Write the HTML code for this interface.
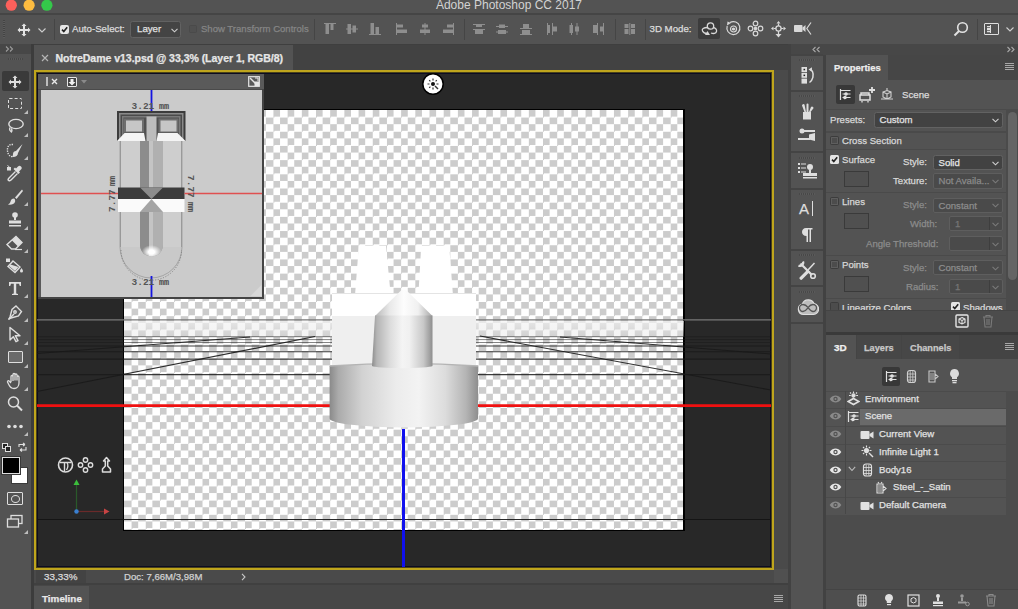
<!DOCTYPE html>
<html><head><meta charset="utf-8">
<style>
*{margin:0;padding:0;box-sizing:border-box}
html,body{width:1018px;height:609px;overflow:hidden;background:#535353;font-family:"Liberation Sans",sans-serif;color:#d6d6d6;font-size:10px}
.a{position:absolute}
.t{white-space:nowrap;line-height:12px;-webkit-text-stroke:0.25px currentColor}
#title{left:0;top:0;width:1018px;height:13px;background:#535353}
#titleline{left:0;top:13px;width:1018px;height:2px;background:#454545}
#opts{left:0;top:15px;width:1018px;height:29px;background:#535353}
#optsline{left:0;top:44px;width:1018px;height:1px;background:#3f3f3f}
#tools{left:0;top:44px;width:31px;height:565px;background:#535353}
#toolshead{left:0;top:44px;width:31px;height:10px;background:#474747}
#gapL{left:31px;top:44px;width:3px;height:565px;background:#3c3c3c}
#tabrow{left:34px;top:45px;width:754px;height:25px;background:#424242}
#doctab{left:34px;top:45px;width:259px;height:25px;background:#535353}
#docwin{left:34px;top:70px;width:754px;height:514px;background:#4a4a4a}
#frame{left:34px;top:70px;width:740px;height:499.5px;border:2px solid #bfa51d;background:#282828;box-shadow:inset 0 0 0 1px #4a4218,inset 0 0 0 2px #0c0c22}
#status{left:34px;top:570px;width:740px;height:14px;background:#4a4a4a}
#zoomf{left:36px;top:570px;width:50px;height:13px;background:#434343}
#tlrow{left:34px;top:584px;width:754px;height:25px;background:#474747}
#tltab{left:34px;top:586px;width:55px;height:23px;background:#535353}
#gapM{left:788px;top:44px;width:3px;height:565px;background:#424242}
#iconcol{left:791px;top:44px;width:32px;height:565px;background:#535353}
#iconhead{left:791px;top:44px;width:227px;height:11px;background:#474747}
#gapR{left:823px;top:55px;width:3px;height:554px;background:#424242}
#rpanel{left:826px;top:55px;width:192px;height:554px;background:#535353}

#proptabs{left:826px;top:55px;width:192px;height:25px;background:#464646}
#proptab{left:826px;top:55px;width:62px;height:25px;background:#535353}
#checker{left:124px;top:110px;width:559px;height:419.5px;
 background-color:#fff;
 background-image:conic-gradient(#cccccc 0 25%,#fff 0 50%,#cccccc 0 75%,#fff 0);
 background-size:14.2px 14.2px;background-position:0 0}

</style></head><body>

<!-- skeleton -->
<div class="a" id="title"></div>
<div class="a" id="titleline"></div>
<div class="a" id="opts"></div>
<div class="a" id="optsline"></div>
<div class="a" id="tools"></div>
<div class="a" id="toolshead"></div>
<div class="a" id="gapL"></div>
<div class="a" id="tabrow"></div>
<div class="a" id="doctab"></div>
<div class="a" id="docwin"></div>
<div class="a" id="frame"></div>
<div class="a" id="status"></div>
<div class="a" id="zoomf"></div>
<div class="a" id="tlrow"></div>
<div class="a" id="tltab"></div>
<div class="a" id="gapM"></div>
<div class="a" id="iconcol"></div>
<div class="a" id="iconhead"></div>
<div class="a" id="gapR"></div>
<div class="a" id="rpanel"></div>

<div class="a" id="proptabs"></div>
<div class="a" id="proptab"></div>

<!-- opts -->
<svg class="a" style="left:0;top:0" width="60" height="13"><circle cx="11.3" cy="5.2" r="5.6" fill="#fc605b"/><circle cx="29.1" cy="5.2" r="5.6" fill="#fdbc40"/><circle cx="46.9" cy="5.2" r="5.6" fill="#34c84a"/></svg>
<div class="a" style="left:0;top:-3px;width:1018px;text-align:center;font-size:12px;color:#d2d2d2;line-height:16px">Adobe Photoshop CC 2017</div>
<div class="a" style="left:3px;top:20px;width:2px;height:18px;background:repeating-linear-gradient(#444 0 1px,#5c5c5c 1px 2px)"></div>
<svg class="a" style="left:17px;top:23px" width="14" height="14" viewBox="0 0 14 14"><path d="M7 0.5L9.5 3H8v3h3V4.5L13.5 7 11 9.5V8H8v3h1.5L7 13.5 4.5 11H6V8H3v1.5L0.5 7 3 4.5V6h3V3H4.5z" fill="#e4e4e4"/></svg>
<svg class="a" style="left:38px;top:28px" width="8" height="5"><path d="M0.5 0.5L4 4l3.5-3.5" stroke="#cfcfcf" stroke-width="1.1" fill="none"/></svg>
<div class="a" style="left:54px;top:19px;width:1px;height:21px;background:#454545"></div>
<div class="a" style="left:314px;top:19px;width:1px;height:21px;background:#454545"></div>
<div class="a" style="left:464px;top:19px;width:1px;height:21px;background:#454545"></div>
<div class="a" style="left:614.5px;top:19px;width:1px;height:21px;background:#454545"></div>
<div class="a" style="left:645px;top:19px;width:1px;height:21px;background:#454545"></div>
<div class="a" style="left:976.5px;top:19px;width:1px;height:21px;background:#454545"></div>
<div class="a" style="left:59.5px;top:24.5px;width:9px;height:9px;background:#e6e6e6;border-radius:2px"></div>
<svg class="a" style="left:59.5px;top:24.5px" width="9" height="9"><path d="M2 4.6l1.8 1.9L7.2 2.2" stroke="#222" stroke-width="1.6" fill="none"/></svg>
<div class="a t" style="left:72px;top:23px;font-size:9.7px;color:#dcdcdc">Auto-Select:</div>
<div class="a" style="left:130px;top:21px;width:51px;height:17px;background:#444444;border:1px solid #626262;border-radius:2.5px"></div>
<div class="a t" style="left:137px;top:23px;font-size:9.7px;color:#e2e2e2">Layer</div>
<svg class="a" style="left:171px;top:28px" width="7" height="5"><path d="M0.5 0.8L3.5 3.8l3-3" stroke="#cfcfcf" stroke-width="1.1" fill="none"/></svg>
<div class="a" style="left:189px;top:25px;width:8px;height:8px;border:1px solid #4a4a4a;background:#505050;border-radius:1.5px"></div>
<div class="a t" style="left:201px;top:23px;font-size:9.55px;color:#858585">Show Transform Controls</div>
<svg class="a" style="left:322.5px;top:22px" width="14" height="14" viewBox="0 0 14 14" fill="#8e8e8e"><path d="M1 1h12v1H1z"/><rect x="2.5" y="2" width="3.5" height="10"/><rect x="7.5" y="2" width="3" height="6"/></svg>
<svg class="a" style="left:345px;top:22px" width="14" height="14" viewBox="0 0 14 14" fill="#8e8e8e"><path d="M1 6.5h12v1H1z"/><rect x="2.5" y="2" width="3.5" height="10"/><rect x="7.5" y="3.5" width="3.5" height="7"/></svg>
<svg class="a" style="left:368px;top:22px" width="14" height="14" viewBox="0 0 14 14" fill="#8e8e8e"><path d="M1 12h12v1H1z"/><rect x="2.5" y="1" width="3.5" height="11"/><rect x="7.5" y="5" width="3.5" height="7"/></svg>
<svg class="a" style="left:395.4px;top:22px" width="14" height="14" viewBox="0 0 14 14" fill="#8e8e8e"><path d="M1 1h1v12H1z"/><rect x="2" y="2.5" width="6" height="3"/><rect x="2" y="7.5" width="10" height="3.5"/></svg>
<svg class="a" style="left:418px;top:22px" width="14" height="14" viewBox="0 0 14 14" fill="#8e8e8e"><path d="M6.5 1h1v12h-1z"/><rect x="4" y="2.5" width="6" height="3"/><rect x="2" y="7.5" width="10" height="3.5"/></svg>
<svg class="a" style="left:440.8px;top:22px" width="14" height="14" viewBox="0 0 14 14" fill="#8e8e8e"><path d="M12 1h1v12h-1z"/><rect x="6" y="2.5" width="6" height="3"/><rect x="2" y="7.5" width="10" height="3.5"/></svg>
<svg class="a" style="left:471.6px;top:22px" width="14" height="14" viewBox="0 0 14 14" fill="#8e8e8e"><path d="M1 2h12v1H1zM1 7h12v1H1z"/><rect x="4" y="3" width="6" height="2"/><rect x="3" y="8" width="8" height="4"/></svg>
<svg class="a" style="left:495.2px;top:22px" width="14" height="14" viewBox="0 0 14 14" fill="#8e8e8e"><path d="M1 4h12v1H1zM1 9.5h12v1H1z"/><rect x="4" y="2.5" width="6" height="3.5"/><rect x="3" y="8" width="8" height="4"/></svg>
<svg class="a" style="left:518.6px;top:22px" width="14" height="14" viewBox="0 0 14 14" fill="#8e8e8e"><path d="M1 6h12v1H1zM1 12h12v1H1z"/><rect x="4" y="2" width="6" height="4"/><rect x="3" y="8" width="8" height="4"/></svg>
<svg class="a" style="left:544.5px;top:22px" width="14" height="14" viewBox="0 0 14 14" fill="#8e8e8e"><path d="M2 1h1v12H2zM7 1h1v12H7z"/><rect x="3" y="3" width="2" height="8"/><rect x="8" y="4.5" width="4" height="5"/></svg>
<svg class="a" style="left:567.2px;top:22px" width="14" height="14" viewBox="0 0 14 14" fill="#8e8e8e"><path d="M4 1h1v12H4zM9.5 1h1v12h-1z"/><rect x="2.5" y="3" width="3.5" height="8"/><rect x="8" y="4.5" width="4" height="5"/></svg>
<svg class="a" style="left:590.8px;top:22px" width="14" height="14" viewBox="0 0 14 14" fill="#8e8e8e"><path d="M6 1h1v12H6zM12 1h1v12h-1z"/><rect x="2" y="3" width="4" height="8"/><rect x="9" y="4.5" width="3" height="5"/></svg>
<svg class="a" style="left:623px;top:22px" width="14" height="14" viewBox="0 0 14 14" fill="#8e8e8e"><rect x="1.5" y="2" width="4" height="4"/><rect x="1.5" y="7" width="4" height="5"/><rect x="8" y="2" width="4" height="4"/><rect x="8" y="7" width="4" height="5"/><path d="M6.3 1h1v12h-1z"/></svg>
<div class="a t" style="left:649.5px;top:23px;font-size:9.7px;color:#dcdcdc">3D Mode:</div>
<div class="a" style="left:698px;top:18px;width:22px;height:21px;background:#3c3c3c;border-radius:2px"></div>
<svg class="a" style="left:700px;top:19px" width="19" height="19" viewBox="0 0 19 19" fill="none" stroke="#d8d8d8" stroke-width="1.3"><circle cx="10.5" cy="7" r="3.2"/><path d="M7.5 8.5C3.5 8.5 1.5 10 2.5 12s3 2.5 4.5 2.5"/><path d="M13.5 8.5c2 .5 3.5 2 3 4s-3 2.5-5.5 1.5"/><path d="M5 16h5l-2.5-4z" fill="#d8d8d8" stroke="none"/></svg>
<svg class="a" style="left:724.5px;top:20px" width="17" height="17" viewBox="0 0 17 17" fill="none" stroke="#d8d8d8" stroke-width="1.2"><path d="M5 2.5A6.5 6.5 0 1 1 2.2 6"/><circle cx="8.5" cy="9" r="3"/><circle cx="8.5" cy="9" r="1" fill="#d8d8d8"/><path d="M2 5.5L2.5 1.5 6 3z" fill="#d8d8d8" stroke="none"/></svg>
<svg class="a" style="left:747px;top:20px" width="17" height="17" viewBox="0 0 17 17" fill="none" stroke="#d8d8d8" stroke-width="1.2"><circle cx="8.5" cy="3.5" r="2.3"/><circle cx="8.5" cy="13.5" r="2.3"/><circle cx="3.5" cy="8.5" r="2.3"/><circle cx="13.5" cy="8.5" r="2.3"/><circle cx="8.5" cy="8.5" r="1.2" fill="#d8d8d8"/></svg>
<svg class="a" style="left:770px;top:20px" width="17" height="18" viewBox="0 0 17 18" fill="#d8d8d8"><circle cx="8.5" cy="8.5" r="2.6" fill="none" stroke="#d8d8d8" stroke-width="1.3"/><path d="M8.5 1l2 2.5h-4zM1 8.5l2.5-2v4zM16 8.5l-2.5 2v-4zM8.5 17.5l-3-3.5h6z"/><path d="M8.5 3.5v2.5M8.5 11v3M3.5 8.5H6M11 8.5h2.5" stroke="#d8d8d8" stroke-width="1.2"/></svg>
<svg class="a" style="left:792.5px;top:21px" width="19" height="15" viewBox="0 0 19 15" fill="#d8d8d8"><rect x="1" y="4" width="8.5" height="7" rx="0.8"/><path d="M9.5 6.5l3-2.5v7l-3-2.5z"/><path d="M18 1.5L13.8 7.5 18 13.5" stroke="#d8d8d8" stroke-width="1.2" fill="none"/></svg>
<svg class="a" style="left:953px;top:21px" width="16" height="16" viewBox="0 0 16 16" fill="none" stroke="#e2e2e2" stroke-width="1.6"><circle cx="9.5" cy="6.5" r="4.8"/><path d="M6 10l-4.5 4.5" stroke-width="2"/></svg>
<div class="a" style="left:984px;top:23px;width:15px;height:12px;border:1.5px solid #dedede;border-radius:1px"></div>
<div class="a" style="left:986.5px;top:25.5px;width:3px;height:7px;background:repeating-linear-gradient(#dedede 0 1.5px,#777 1.5px 2.3px)"></div><div class="a" style="left:989.5px;top:25px;width:1px;height:8px;background:#dedede"></div>
<svg class="a" style="left:1006px;top:27px" width="8" height="5"><path d="M0.5 0.5L4 4l3.5-3.5" stroke="#cfcfcf" stroke-width="1.1" fill="none"/></svg>
<!-- tools -->
<svg class="a" style="left:5px;top:45px" width="10" height="8" viewBox="0 0 10 8" fill="none" stroke="#9a9a9a" stroke-width="1.1"><path d="M1 1.5l2.5 2.5L1 6.5M5 1.5l2.5 2.5L5 6.5"/></svg>
<div class="a" style="left:8px;top:58px;width:15px;height:2px;background:repeating-linear-gradient(90deg,#474747 0 1px,#5a5a5a 1px 2px)"></div>
<div class="a" style="left:2px;top:71px;width:27px;height:20px;background:#3a3a3a;border-radius:2px"></div>
<svg class="a" style="left:8px;top:74.5px" width="14" height="14" viewBox="0 0 14 14"><path d="M7 0.5L9.5 3H8v3h3V4.5L13.5 7 11 9.5V8H8v3h1.5L7 13.5 4.5 11H6V8H3v1.5L0.5 7 3 4.5V6h3V3H4.5z" fill="#dedede"/></svg>
<div class="a" style="left:7.5px;top:97.5px;width:14px;height:11.5px;border:1.5px dashed #dedede;border-radius:1.5px"></div>
<svg class="a" style="left:24px;top:110px" width="4" height="4"><path d="M4 0V4H0z" fill="#bdbdbd"/></svg>
<svg class="a" style="left:6px;top:118px" width="18" height="16" viewBox="0 0 18 16" fill="none" stroke="#dedede" stroke-width="1.4"><ellipse cx="10" cy="6" rx="7.2" ry="4.6"/><path d="M4 9.5c-1 2 0 4 2 4.5M5 10.5c1.5 1 1 3 0 4"/></svg>
<svg class="a" style="left:24px;top:133px" width="4" height="4"><path d="M4 0V4H0z" fill="#bdbdbd"/></svg>
<svg class="a" style="left:5px;top:142px" width="20" height="18" viewBox="0 0 20 18" fill="none"><path d="M8 2.5C4 2 2 5 2.5 9s3 6 5 5.5" stroke="#dedede" stroke-width="1.4" stroke-dasharray="1.3 1.1"/><path d="M17.5 2L11 9c-1.5 0-3 1-3 3 0 1.5-.5 2.5-1 3 3 .5 6-1 6-4z" fill="#dedede"/></svg>
<svg class="a" style="left:24px;top:156px" width="4" height="4"><path d="M4 0V4H0z" fill="#bdbdbd"/></svg>
<svg class="a" style="left:5px;top:164px" width="20" height="19" viewBox="0 0 20 19" fill="none"><path d="M2 3h4v3.5H2z" fill="#dedede"/><path d="M2.5 1.5l2 1.5" stroke="#dedede" stroke-width="1"/><path d="M16 2.5c1 1 1 2 0 3l-2 2 1 1-1.5 1.5-5-5L10 3.5l1 1 2-2c1-1 2-1 3 0z" fill="#dedede"/><path d="M10.5 7.5L4 14c-.7.7-1 2-.5 2.5s1.8.2 2.5-.5l6.5-6.5" stroke="#dedede" stroke-width="1.4"/></svg>
<svg class="a" style="left:6px;top:188px" width="18" height="18" viewBox="0 0 18 18"><path d="M16 1.5L9 9.5l1.5 1.5L17 3z" fill="#dedede"/><path d="M8 10.5c-2 0-3 1-3.5 3S3 16 2 16.5c3 .5 6 0 7-2.5.5-1.5 0-3-1-3.5z" fill="#dedede"/></svg>
<svg class="a" style="left:24px;top:202px" width="4" height="4"><path d="M4 0V4H0z" fill="#bdbdbd"/></svg>
<svg class="a" style="left:6px;top:211px" width="18" height="18" viewBox="0 0 18 18" fill="#dedede"><circle cx="9" cy="4" r="2.8"/><path d="M8 6h2v3H8z"/><path d="M3 9.5h12v3H3z"/><path d="M3 14h12v1.5H3z"/></svg>
<svg class="a" style="left:24px;top:226px" width="4" height="4"><path d="M4 0V4H0z" fill="#bdbdbd"/></svg>
<svg class="a" style="left:5px;top:235px" width="20" height="17" viewBox="0 0 20 17"><path d="M11 1.5l6 6-6.5 6.5H6.5L2 9.5z" fill="none" stroke="#dedede" stroke-width="1.4"/><path d="M11 1.5l6 6-4 4-6-6z" fill="#dedede"/><path d="M10 14.5h7" stroke="#dedede" stroke-width="1.2"/></svg>
<svg class="a" style="left:24px;top:249px" width="4" height="4"><path d="M4 0V4H0z" fill="#bdbdbd"/></svg>
<svg class="a" style="left:4px;top:256px" width="22" height="19" viewBox="0 0 22 19"><path d="M2 2.5h4v3.5H2z" fill="#dedede"/><path d="M9 5l7 6-5 5.5-7-6z" fill="none" stroke="#dedede" stroke-width="1.4"/><path d="M6.5 8.5l8 2.5-3.5 4-6-5z" fill="#dedede"/><path d="M17.5 12c.5 1 1.5 2 1.5 3a1.5 1.5 0 01-3 0c0-1 1-2 1.5-3z" fill="#dedede"/></svg>
<svg class="a" style="left:8px;top:281px" width="14" height="15" viewBox="0 0 14 15" fill="#dedede"><path d="M1 1h12v4h-1.2L11 2.8H8.2V12.5l1.8.6V14H4v-.9l1.8-.6V2.8H3L2.2 5H1z"/></svg>
<svg class="a" style="left:24px;top:294px" width="4" height="4"><path d="M4 0V4H0z" fill="#bdbdbd"/></svg>
<svg class="a" style="left:6px;top:304px" width="18" height="17" viewBox="0 0 18 17" fill="none" stroke="#dedede" stroke-width="1.4"><path d="M10 2l5.5 5.5-3 4.5L5 14l-2.5 1.5L4 13l2-7.5z"/><path d="M3 15l5-5"/><circle cx="9" cy="8" r="1.2"/></svg>
<svg class="a" style="left:24px;top:318px" width="4" height="4"><path d="M4 0V4H0z" fill="#bdbdbd"/></svg>
<svg class="a" style="left:8px;top:326px" width="14" height="17" viewBox="0 0 14 17"><path d="M2 1.5v12.5l3.3-3.3 2.7 5 2-1-2.7-5H12z" fill="none" stroke="#dedede" stroke-width="1.4" stroke-linejoin="round"/></svg>
<svg class="a" style="left:24px;top:341px" width="4" height="4"><path d="M4 0V4H0z" fill="#bdbdbd"/></svg>
<div class="a" style="left:7.5px;top:351px;width:15px;height:12px;border:1.4px solid #dedede;background:#6a6a6a;border-radius:1px"></div>
<svg class="a" style="left:24px;top:364px" width="4" height="4"><path d="M4 0V4H0z" fill="#bdbdbd"/></svg>
<svg class="a" style="left:6px;top:372px" width="18" height="18" viewBox="0 0 18 18" fill="none" stroke="#dedede" stroke-width="1.3"><path d="M5 10V4.5a1 1 0 012 0V9M7 8.5V2.5a1 1 0 012 0V8.5M9 8.5V3a1 1 0 012 0v5.5M11 8.5V5a1 1 0 012 0v6c0 3-2 5.5-5 5.5S4 15 3 13l-1.5-3a1 1 0 011.8-.8L5 11"/></svg>
<svg class="a" style="left:24px;top:387px" width="4" height="4"><path d="M4 0V4H0z" fill="#bdbdbd"/></svg>
<svg class="a" style="left:6px;top:395px" width="18" height="17" viewBox="0 0 18 17" fill="none" stroke="#dedede"><circle cx="7.5" cy="7" r="5" stroke-width="1.5"/><path d="M11 10.5l5 5" stroke-width="2"/></svg>
<svg class="a" style="left:6px;top:424px" width="18" height="5" viewBox="0 0 18 5" fill="#dedede"><circle cx="3" cy="2.5" r="1.8"/><circle cx="9" cy="2.5" r="1.8"/><circle cx="15" cy="2.5" r="1.8"/></svg>
<svg class="a" style="left:24px;top:432px" width="4" height="4"><path d="M4 0V4H0z" fill="#bdbdbd"/></svg>
<svg class="a" style="left:2px;top:443px" width="9" height="9" viewBox="0 0 9 9"><rect x="0.5" y="0.5" width="5" height="5" fill="#222" stroke="#dedede"/><rect x="3.5" y="3.5" width="5" height="5" fill="#222" stroke="#dedede"/></svg>
<svg class="a" style="left:17px;top:442px" width="11" height="10" viewBox="0 0 11 10" fill="none" stroke="#dedede" stroke-width="1.1"><path d="M2 5V2.5h6M8 2.5L6 1M8 2.5L6 4M9 5v3H3M3 8L5 6.5M3 8l2 1.5"/></svg>
<div class="a" style="left:10.5px;top:466.5px;width:17px;height:17px;background:#fff;border:1px solid #3a3a3a"></div>
<div class="a" style="left:2px;top:456.5px;width:17.5px;height:17.5px;background:#000;border:1.5px solid #dedede;box-shadow:0 0 0 1px #3a3a3a"></div>
<div class="a" style="left:7px;top:492px;width:16px;height:13px;border:1.2px solid #dedede;border-radius:1px"></div>
<div class="a" style="left:10.5px;top:494.5px;width:9px;height:8px;border:1.2px solid #dedede;border-radius:50%"></div>
<svg class="a" style="left:6px;top:514px" width="18" height="16" viewBox="0 0 18 16" fill="none" stroke="#dedede" stroke-width="1.3"><rect x="5" y="1.5" width="11" height="8"/><rect x="1.5" y="5" width="11" height="8" fill="#535353"/></svg>
<svg class="a" style="left:24px;top:530px" width="4" height="4"><path d="M4 0V4H0z" fill="#bdbdbd"/></svg>
<!-- canvas -->
<svg class="a" style="left:40.5px;top:53.5px" width="8" height="8" viewBox="0 0 8 8"><path d="M1 1l6 6M7 1L1 7" stroke="#b4b4b4" stroke-width="1.2"/></svg>
<div class="a t" style="left:55.5px;top:51.5px;font-size:10.55px;font-weight:bold;color:#e6e6e6;letter-spacing:-0.05px">NotreDame v13.psd @ 33,3% (Layer 1, RGB/8)</div>


<div class="a" style="left:123px;top:109px;width:562px;height:422px;background:#000"></div><div class="a" id="checker"></div>

<!-- scene -->
<svg class="a" style="left:37px;top:73px" width="734" height="494" viewBox="37 73 734 494"><defs><linearGradient id="fog" x1="0" y1="0" x2="0" y2="1"><stop offset="0" stop-color="#f4f4f4" stop-opacity="0.7"/><stop offset="0.6" stop-color="#e8e8e8" stop-opacity="0.45"/><stop offset="1" stop-color="#dddddd" stop-opacity="0.3"/></linearGradient></defs><rect x="124" y="321" width="560" height="16" fill="url(#fog)"/><path d="M37 319.8H771" stroke="#787878" stroke-width="1.2"/><g stroke="#1a1a1a" fill="none"><path d="M37 336.7H771M37 339.6H771M37 342.5H771" stroke-width="0.9" opacity="0.6"/><path d="M37 346H771M37 351.7H771M37 359.1H771M37 374.6H771" stroke-width="1.1" opacity="0.85"/><path d="M37 391.5L315 336.5M37 353.5L250 337M771 390L480 336M771 354L560 337" stroke-width="1.1" opacity="0.9"/></g><path d="M37 519.5H771" stroke="#141414" stroke-width="1.2" opacity="0.9"/><path d="M37 405.7H771" stroke="#f01010" stroke-width="2.8"/></svg>
<svg class="a" style="left:320px;top:240px" width="170" height="200" viewBox="320 240 170 200"><defs><linearGradient id="gc" x1="0" x2="1"><stop offset="0" stop-color="#8a8a8a"/><stop offset="0.06" stop-color="#ababab"/><stop offset="0.22" stop-color="#d2d2d2"/><stop offset="0.45" stop-color="#ececec"/><stop offset="0.6" stop-color="#f3f3f3"/><stop offset="0.78" stop-color="#dcdcdc"/><stop offset="0.92" stop-color="#b4b4b4"/><stop offset="1" stop-color="#8e8e8e"/></linearGradient><linearGradient id="gu" x1="0" x2="1"><stop offset="0" stop-color="#8c8c8c"/><stop offset="0.08" stop-color="#b4b4b4"/><stop offset="0.3" stop-color="#dcdcdc"/><stop offset="0.5" stop-color="#f4f4f4"/><stop offset="0.62" stop-color="#f0f0f0"/><stop offset="0.85" stop-color="#c8c8c8"/><stop offset="1" stop-color="#8e8e8e"/></linearGradient><linearGradient id="gk" x1="0" x2="1"><stop offset="0" stop-color="#b8b8b8"/><stop offset="0.25" stop-color="#e8e8e8"/><stop offset="0.5" stop-color="#fdfdfd"/><stop offset="0.75" stop-color="#f0f0f0"/><stop offset="1" stop-color="#a8a8a8"/></linearGradient></defs><path d="M358.8 245.8H386L390.5 293H355.2z" fill="#ffffff"/><path d="M421.2 245.8H449.2L452.8 293H418.5z" fill="#ffffff"/><rect x="332" y="293" width="144" height="23" fill="#ffffff"/><path d="M332 293.5H476" stroke="#e4e4e4" stroke-width="1"/><rect x="332" y="316" width="144" height="50" fill="#efefef"/><path d="M329.6 366Q404 361 478 366V418.5A74.2 9 0 0 1 329.6 418.5z" fill="url(#gc)"/><path d="M329.6 366Q404 361 478 366" stroke="#b4b4b4" stroke-width="1.5" fill="none"/><path d="M401.5 290H406L432.5 316H375z" fill="url(#gk)"/><path d="M375 315.5H432.5V366A30.5 2.5 0 0 1 372 366z" fill="url(#gu)"/></svg>
<div class="a" style="left:402px;top:429px;width:3px;height:138px;background:#1010ee"></div>
<!-- canvas2 -->
<div class="a" style="left:38px;top:73.5px;width:226px;height:225.5px;background:#5a5a5a"></div>
<div class="a" style="left:38px;top:89px;width:226px;height:1px;background:#4a4a4a"></div>
<div class="a" style="left:262px;top:89px;width:2px;height:210px;background:#444"></div>
<div class="a" style="left:38px;top:297px;width:226px;height:2px;background:#444"></div>
<div class="a" style="left:40.5px;top:90px;width:221.5px;height:207px;background:#cbcbcb"></div>
<div class="a" style="left:45.5px;top:76.5px;width:2px;height:9px;background:#bdbdbd"></div>
<svg class="a" style="left:50.5px;top:78px" width="7" height="7"><path d="M1 1l5 5M6 1L1 6" stroke="#e8e8e8" stroke-width="1.4"/></svg>
<div class="a" style="left:67px;top:76.5px;width:10px;height:10px;border:1.2px solid #e6e6e6;background:#444;border-radius:1px"></div>
<svg class="a" style="left:67px;top:76.5px" width="10" height="10"><path d="M3.5 2h3v3h2L5 8.5 1.5 5h2z" fill="#f0f0f0"/></svg>
<svg class="a" style="left:81px;top:80px" width="6" height="4"><path d="M0 0h6L3 3.5z" fill="#8a8a8a"/></svg>
<svg class="a" style="left:248px;top:76px" width="12" height="11" viewBox="0 0 12 11"><rect x="0.7" y="0.7" width="10.6" height="9.6" fill="none" stroke="#e6e6e6" stroke-width="1.2"/><path d="M2 2l7 7" stroke="#e6e6e6" stroke-width="1.5"/><rect x="6.5" y="5.5" width="4.5" height="4.5" fill="#e6e6e6"/><path d="M7 2h3v3" stroke="#e6e6e6" stroke-width="1" fill="none"/></svg>
<svg class="a" style="left:40.5px;top:90px" width="221.5" height="207" viewBox="40.5 90 221.5 207"><defs><radialGradient id="hl" cx="0.5" cy="0.5" r="0.5"><stop offset="0.3" stop-color="#fff"/><stop offset="1" stop-color="#fff" stop-opacity="0"/></radialGradient></defs><path d="M119.5 140V247A31 31 0 0 0 181.5 247V140" fill="#c9c9c9" stroke="#9a9a9a" stroke-width="0.8"/><path d="M120.5 250A30 30 0 0 0 181 250" fill="none" stroke="#777" stroke-width="0.8" stroke-dasharray="1.2 1.5"/><rect x="120" y="140" width="61" height="107" fill="#cecece"/><path d="M120 140V247M181 140V247" stroke="#888" stroke-width="0.7"/><rect x="116.5" y="111" width="68.5" height="30" fill="#3c3c3c"/><rect x="118.5" y="113" width="64.5" height="28" fill="#8a8a8a"/><rect x="120" y="114.5" width="61.5" height="26.5" fill="#4a4a4a"/><rect x="121.5" y="116" width="58.5" height="25" fill="#7a7a7a"/><rect x="123" y="117.5" width="55.5" height="23.5" fill="#505050"/><rect x="146" y="116.5" width="10" height="25" fill="#bcbcbc"/><rect x="123.5" y="118.5" width="20" height="14" fill="#6e6e6e"/><rect x="125.5" y="120.5" width="16" height="11" fill="#c6c6c6"/><rect x="158" y="118.5" width="20" height="14" fill="#6e6e6e"/><rect x="160" y="120.5" width="16" height="11" fill="#c6c6c6"/><path d="M116.5 141L124 133H143.5L145 141z" fill="#f4f4f4"/><path d="M156 141L157.5 133H177L185 141z" fill="#f4f4f4"/><defs><clipPath id="stripc"><path d="M139.5 141H162.5V245A11.5 11.5 0 0 1 139.5 245z"/></clipPath></defs><g clip-path="url(#stripc)"><rect x="139.5" y="141" width="23" height="120" fill="#9e9e9e"/><rect x="139.5" y="141" width="9" height="120" fill="#8c8c8c"/><rect x="148.5" y="141" width="4.5" height="120" fill="#c4c4c4"/><rect x="153" y="141" width="9.5" height="120" fill="#b0b0b0"/><ellipse cx="151" cy="252" rx="10" ry="7" fill="url(#hl)"/></g><rect x="117.5" y="187.5" width="66.5" height="11.5" fill="#3c3c3c"/><rect x="117.5" y="199" width="66.5" height="13" fill="#fafafa"/><path d="M139.5 187.5L151 199L162.5 187.5z" fill="#8c8c8c"/><path d="M139.5 212L151 199L162.5 212z" fill="#a4a4a4"/><path d="M40.5 193.5H117.5M184 193.5H262" stroke="#e05050" stroke-width="1.3"/><path d="M151 90V111M151 276V297" stroke="#1515e0" stroke-width="1.8"/><g font-family="Liberation Mono" font-size="9.5" fill="#555" font-weight="bold"><text x="131" y="109">3.21</text><text x="131" y="285">3.21</text><text x="158.5" y="109" font-size="8.5" fill="#4c4c4c">mm</text><text x="158.5" y="285" font-size="8.5" fill="#4c4c4c">mm</text><text transform="translate(114 212) rotate(-90)">7.77</text><text transform="translate(114 186) rotate(-90)" font-size="8.5" fill="#4c4c4c">mm</text><text transform="translate(187 175) rotate(90)">7.77</text><text transform="translate(187 202) rotate(90)" font-size="8.5" fill="#4c4c4c">mm</text></g><path d="M250 296L261 285V296z" fill="#d8d8d8"/></svg>
<svg class="a" style="left:421px;top:72px" width="24" height="24" viewBox="0 0 24 24"><circle cx="12" cy="12" r="10.2" fill="#fff" stroke="#000" stroke-width="1.5"/><circle cx="12" cy="12" r="2" fill="#111"/><g stroke="#333" stroke-width="1.2"><path d="M12 6.5v2M12 15.5v2M6.5 12h2M15.5 12h2M8.2 8.2l1.2 1.2M15.8 8.2l-1.2 1.2M8.2 15.8l1.2-1.2"/><path d="M14 14l3 3" stroke-width="1.4"/></g></svg>
<svg class="a" style="left:56px;top:456px" width="60" height="18" viewBox="0 0 60 18" fill="none" stroke="#dcdcdc" stroke-width="1.6"><circle cx="9.5" cy="9" r="7"/><path d="M3.5 6.5h12M8.5 6.5v9" stroke-width="1.4"/><path d="M11 6.5c1.2 2 1 5-.5 7.5" stroke-width="1.3"/><circle cx="29.5" cy="4" r="2.2" stroke-width="1.4"/><circle cx="29.5" cy="14" r="2.2" stroke-width="1.4"/><circle cx="24.5" cy="9" r="2.2" stroke-width="1.4"/><circle cx="34.5" cy="9" r="2.2" stroke-width="1.4"/><path d="M50.5 1.5L47.5 5H49.3V10L46.5 13V16H54.5V13L51.7 10V5H53.5z" stroke-width="1.5" stroke-linejoin="round"/></svg>
<svg class="a" style="left:70px;top:476px" width="44" height="40" viewBox="0 0 44 40"><path d="M6.5 35V8" stroke="#2a5a2a" stroke-width="1.2"/><path d="M6.5 3.5L9.5 9H3.5z" fill="#3cbf3c"/><path d="M7 35.5H35" stroke="#6a2a2a" stroke-width="1.2"/><path d="M39.5 35.5L34 32.5v6z" fill="#c84444"/><circle cx="6.5" cy="35.5" r="2.2" fill="#3a80d0"/></svg>
<!-- status -->
<div class="a t" style="left:44px;top:570.5px;font-size:9.85px;color:#dadada">33,33%</div>
<div class="a t" style="left:124px;top:570.5px;font-size:9.6px;color:#d0d0d0">Doc: 7,66M/3,98M</div>
<svg class="a" style="left:241px;top:573px" width="5" height="8"><path d="M1 0.8L4 4 1 7.2" stroke="#c8c8c8" stroke-width="1.1" fill="none"/></svg>
<div class="a" style="left:774px;top:569px;width:14px;height:14px;background:#505050"></div>
<div class="a" style="left:34px;top:583px;width:754px;height:2px;background:#404040"></div>
<div class="a t" style="left:42px;top:592.5px;font-size:9.9px;font-weight:bold;color:#e8e8e8">Timeline</div>
<div class="a" style="left:773.5px;top:595px;width:9px;height:7px;background:repeating-linear-gradient(#a8a8a8 0 1px,transparent 1px 2px)"></div>
<!-- iconcol -->
<svg class="a" style="left:464px;top:47px" width="1" height="1"></svg>
<svg class="a" style="left:810.5px;top:46px" width="10" height="7" viewBox="0 0 10 7" fill="none" stroke="#a8a8a8" stroke-width="1.1"><path d="M4.5 1L2 3.5 4.5 6M8.5 1L6 3.5 8.5 6"/></svg>
<svg class="a" style="left:1006px;top:46px" width="10" height="7" viewBox="0 0 10 7" fill="none" stroke="#a8a8a8" stroke-width="1.1"><path d="M1.5 1L4 3.5 1.5 6M5.5 1L8 3.5 5.5 6"/></svg>
<div class="a" style="left:791px;top:54px;width:32px;height:2px;background:#444"></div>
<div class="a" style="left:791px;top:89.5px;width:32px;height:2px;background:#444"></div>
<div class="a" style="left:791px;top:151px;width:32px;height:2px;background:#444"></div>
<div class="a" style="left:791px;top:187.5px;width:32px;height:2px;background:#444"></div>
<div class="a" style="left:791px;top:248.5px;width:32px;height:2px;background:#444"></div>
<div class="a" style="left:791px;top:285px;width:32px;height:2px;background:#444"></div>
<div class="a" style="left:791px;top:321.5px;width:32px;height:2px;background:#444"></div>
<div class="a" style="left:799px;top:59px;width:16px;height:2px;background:repeating-linear-gradient(90deg,#484848 0 1px,#5a5a5a 1px 2px)"></div>
<div class="a" style="left:799px;top:94.5px;width:16px;height:2px;background:repeating-linear-gradient(90deg,#484848 0 1px,#5a5a5a 1px 2px)"></div>
<div class="a" style="left:799px;top:156.5px;width:16px;height:2px;background:repeating-linear-gradient(90deg,#484848 0 1px,#5a5a5a 1px 2px)"></div>
<div class="a" style="left:799px;top:193px;width:16px;height:2px;background:repeating-linear-gradient(90deg,#484848 0 1px,#5a5a5a 1px 2px)"></div>
<div class="a" style="left:799px;top:254px;width:16px;height:2px;background:repeating-linear-gradient(90deg,#484848 0 1px,#5a5a5a 1px 2px)"></div>
<div class="a" style="left:799px;top:290.5px;width:16px;height:2px;background:repeating-linear-gradient(90deg,#484848 0 1px,#5a5a5a 1px 2px)"></div>
<svg class="a" style="left:800px;top:66px" width="16" height="19" viewBox="0 0 16 19"><rect x="1.5" y="1" width="5.5" height="5" fill="#dedede"/><rect x="3.5" y="2.8" width="1.6" height="1.5" fill="#222"/><rect x="1.5" y="6.8" width="5.5" height="5" fill="#dedede"/><rect x="3.5" y="8.6" width="1.6" height="1.5" fill="#222"/><rect x="1.5" y="12.6" width="5.5" height="5" fill="#dedede"/><path d="M9.5 16.5C13 14 14 9 12.5 5.5 12 4.5 11.5 4 10.5 3.8" stroke="#dedede" stroke-width="1.5" fill="none"/><path d="M8.5 3.5L12 1.2 11.8 5.8z" fill="#dedede"/></svg>
<svg class="a" style="left:798px;top:102px" width="18" height="18" viewBox="0 0 18 18" fill="#dedede"><rect x="5" y="10" width="8" height="7.5"/><path d="M6.5 10L4 3.5a1.5 1.5 0 012.5-1L8 10zM8.5 10V2.5a1 1 0 012 0V10zM11 10l2-5a1.5 1.5 0 012.5 1.2L12.5 10z"/></svg>
<svg class="a" style="left:797px;top:128px" width="20" height="16" viewBox="0 0 20 16" fill="#dedede"><circle cx="5" cy="3" r="2.5"/><path d="M5 2h13v2H5zM1 10h12v2H1z"/><path d="M12 6.5l6-1.5v8l-6-1.5z"/></svg>
<svg class="a" style="left:797px;top:162px" width="20" height="18" viewBox="0 0 20 18" fill="#dedede"><rect x="1" y="1" width="2" height="2"/><rect x="1" y="5" width="2" height="2"/><rect x="1" y="9" width="2" height="2"/><rect x="4" y="1.5" width="5" height="1"/><rect x="4" y="5.5" width="5" height="1"/><rect x="4" y="9.5" width="5" height="1"/><circle cx="13" cy="5" r="3"/><path d="M12 7.5h2V11h-2zM6 11h14v3H6zM6 15h14v1.5H6z"/></svg>
<div class="a t" style="left:799px;top:201px;font-size:15px;line-height:16px;color:#dedede">A</div>
<div class="a" style="left:811.5px;top:201px;width:1.3px;height:15px;background:#dedede"></div>
<svg class="a" style="left:801px;top:227px" width="12" height="16" viewBox="0 0 12 16" fill="#dedede"><path d="M5 1h6.5v1.5H10V15H8.5V2.5H7V15H5.5V9C2.5 9 1 7 1 5s1.5-4 4-4z"/></svg>
<svg class="a" style="left:797px;top:261px" width="20" height="19" viewBox="0 0 20 19"><path d="M3.5 2.5L15 14" stroke="#dedede" stroke-width="2.2"/><path d="M1.5 4.5a3.2 3.2 0 0 0 4.5-4" stroke="#dedede" stroke-width="2.2" fill="none"/><circle cx="16" cy="15" r="2.3" stroke="#dedede" stroke-width="1.6" fill="none"/><path d="M17.5 2L11 9" stroke="#dedede" stroke-width="1.5"/><path d="M10.5 8.5L3 16a1.6 1.6 0 0 0 2.3 2.3L12.8 10.8z" fill="#dedede"/></svg>
<svg class="a" style="left:796.5px;top:299px" width="22" height="17" viewBox="0 0 22 17"><path d="M6.5 15.5a5.3 5.3 0 0 1-1.2-10.4A6.3 6.3 0 0 1 17 4.6a5.5 5.5 0 0 1-.5 10.9z" fill="#bdbdbd" stroke="#dedede" stroke-width="1.2"/><path d="M6 12.5c2.5 0 3.5-1.8 5-3.8S14 5.5 16 5.5a3.5 3.5 0 0 1 0 7c-2 0-3.2-1.8-4.8-3.8S8.5 5.5 6 5.5a3.5 3.5 0 0 0 0 7z" fill="none" stroke="#555" stroke-width="1.3"/></svg>
<!-- props -->
<div class="a t" style="left:834px;top:61.5px;font-size:9.45px;color:#ececec;font-weight:bold;">Properties</div>
<div class="a" style="left:1005px;top:63px;width:9px;height:7px;background:repeating-linear-gradient(#a8a8a8 0 1px,transparent 1px 2px)"></div>
<div class="a" style="left:836px;top:85px;width:19px;height:19px;background:#383838;border-radius:2px"></div>
<svg class="a" style="left:839px;top:88px" width="13" height="13" viewBox="0 0 13 13" fill="none" stroke="#e0e0e0" stroke-width="1.2"><path d="M1.5 1v11M1.5 2.5h10M3.5 6h8M3.5 9.5h8"/><circle cx="7" cy="6" r="1.2" fill="#e0e0e0"/><circle cx="6" cy="9.5" r="1.2" fill="#e0e0e0"/></svg>
<svg class="a" style="left:858px;top:86px" width="18" height="18" viewBox="0 0 18 18" fill="none" stroke="#e0e0e0"><path d="M2 9h10v5H2z M3 9V7h8v2" stroke-width="1.5"/><path d="M4 15v1.5M10 15v1.5" stroke-width="1.3"/><path d="M14 1v6M11 4h6" stroke-width="1.8"/></svg>
<svg class="a" style="left:880px;top:87px" width="14" height="14" viewBox="0 0 14 14" fill="none" stroke="#cfcfcf" stroke-width="1.1"><path d="M7 1v3M3 5l4-1.5L11 5v5l-4 2-4-2zM3 5l4 2 4-2M7 7v5M1 12h12"/></svg>
<div class="a t" style="left:902px;top:89px;font-size:9.7px;color:#dcdcdc;">Scene</div>
<div class="a" style="left:826px;top:108.5px;width:180px;height:1.5px;background:#4a4a4a"></div>
<div class="a t" style="left:830px;top:113.5px;font-size:9.6px;color:#d8d8d8;">Presets:</div>
<div class="a" style="left:873.5px;top:111.5px;width:129.5px;height:16px;background:#424242;border:1px solid #626262;border-radius:2.5px"></div><div class="a t" style="left:879.5px;top:113.5px;font-size:9.6px;color:#e2e2e2;">Custom</div><svg class="a" style="left:992.0px;top:117.5px" width="7" height="5"><path d="M0.5 0.8L3.5 3.8l3-3" stroke="#d0d0d0" stroke-width="1.1" fill="none"/></svg>
<div class="a" style="left:826px;top:131px;width:180px;height:1.5px;background:#4a4a4a"></div>
<div class="a" style="left:830px;top:136px;width:9px;height:9px;border:1px solid #3c3c3c;background:#4c4c4c;border-radius:1.5px;box-shadow:inset 0 0 0 1px #5e5e5e"></div><div class="a t" style="left:842px;top:135px;font-size:9.6px;color:#d8d8d8;">Cross Section</div>
<div class="a" style="left:826px;top:148.5px;width:180px;height:1.5px;background:#4a4a4a"></div>
<div class="a" style="left:830px;top:154.5px;width:9px;height:9px;background:#e4e4e4;border-radius:1.5px"></div><svg class="a" style="left:830px;top:154.5px" width="9" height="9"><path d="M2 4.6l1.8 1.9L7.2 2.2" stroke="#222" stroke-width="1.6" fill="none"/></svg><div class="a t" style="left:842px;top:153.5px;font-size:9.6px;color:#d8d8d8;">Surface</div>
<div class="a t" style="left:903px;top:156px;font-size:9.6px;color:#d8d8d8;">Style:</div><div class="a" style="left:932.5px;top:155px;width:70px;height:15px;background:#424242;border:1px solid #626262;border-radius:2.5px"></div><div class="a t" style="left:938.5px;top:157px;font-size:9.6px;color:#e6e6e6;">Solid</div><svg class="a" style="left:991.5px;top:160.5px" width="7" height="5"><path d="M0.5 0.8L3.5 3.8l3-3" stroke="#d0d0d0" stroke-width="1.1" fill="none"/></svg>
<div class="a t" style="left:893px;top:174.5px;font-size:9.6px;color:#d8d8d8;">Texture:</div><div class="a" style="left:932.5px;top:173px;width:70px;height:15.5px;background:#4a4a4a;border:1px solid #5e5e5e;border-radius:2px"></div><div class="a t" style="left:938.5px;top:175px;font-size:9.6px;color:#8a8a8a;">Not Availa...</div><svg class="a" style="left:991.5px;top:178.75px" width="7" height="5"><path d="M0.5 0.8L3.5 3.8l3-3" stroke="#7a7a7a" stroke-width="1.1" fill="none"/></svg>
<div class="a" style="left:843.5px;top:170.5px;width:25px;height:16px;border:1px solid #3a3a3a;background:#505050"></div>
<div class="a" style="left:826px;top:191.5px;width:180px;height:1.5px;background:#4a4a4a"></div>
<div class="a" style="left:830px;top:197px;width:9px;height:9px;border:1px solid #3c3c3c;background:#4c4c4c;border-radius:1.5px;box-shadow:inset 0 0 0 1px #5e5e5e"></div><div class="a t" style="left:842px;top:196px;font-size:9.6px;color:#d8d8d8;">Lines</div>
<div class="a t" style="left:903px;top:199px;font-size:9.6px;color:#8c8c8c;">Style:</div><div class="a" style="left:932.5px;top:197.5px;width:70px;height:15px;background:#4a4a4a;border:1px solid #5e5e5e;border-radius:2px"></div><div class="a t" style="left:938.5px;top:199.5px;font-size:9.6px;color:#8c8c8c;">Constant</div><svg class="a" style="left:991.5px;top:203.0px" width="7" height="5"><path d="M0.5 0.8L3.5 3.8l3-3" stroke="#7a7a7a" stroke-width="1.1" fill="none"/></svg>
<div class="a t" style="left:910px;top:217.5px;font-size:9.6px;color:#8c8c8c;">Width:</div><div class="a" style="left:949px;top:216px;width:53.5px;height:15px;background:#4a4a4a;border:1px solid #5e5e5e;border-radius:2px"></div><div class="a t" style="left:955px;top:218px;font-size:9.6px;color:#767676;">1</div><svg class="a" style="left:991.5px;top:221.5px" width="7" height="5"><path d="M0.5 0.8L3.5 3.8l3-3" stroke="#7a7a7a" stroke-width="1.1" fill="none"/></svg><div class="a" style="left:988.5px;top:217px;width:1px;height:13px;background:#3e3e3e"></div>
<div class="a t" style="left:866px;top:237.5px;font-size:9.6px;color:#8c8c8c;">Angle Threshold:</div><div class="a" style="left:949px;top:236px;width:53.5px;height:15px;background:#4a4a4a;border:1px solid #5e5e5e;border-radius:2px"></div><svg class="a" style="left:991.5px;top:241.5px" width="7" height="5"><path d="M0.5 0.8L3.5 3.8l3-3" stroke="#7a7a7a" stroke-width="1.1" fill="none"/></svg><div class="a" style="left:988.5px;top:237px;width:1px;height:13px;background:#3e3e3e"></div>
<div class="a" style="left:843.5px;top:213px;width:25px;height:16px;border:1px solid #3a3a3a;background:#505050"></div>
<div class="a" style="left:826px;top:254.5px;width:180px;height:1.5px;background:#4a4a4a"></div>
<div class="a" style="left:830px;top:260px;width:9px;height:9px;border:1px solid #3c3c3c;background:#4c4c4c;border-radius:1.5px;box-shadow:inset 0 0 0 1px #5e5e5e"></div><div class="a t" style="left:842px;top:259px;font-size:9.6px;color:#d8d8d8;">Points</div>
<div class="a t" style="left:903px;top:262px;font-size:9.6px;color:#8c8c8c;">Style:</div><div class="a" style="left:932.5px;top:260px;width:70px;height:15px;background:#4a4a4a;border:1px solid #5e5e5e;border-radius:2px"></div><div class="a t" style="left:938.5px;top:262px;font-size:9.6px;color:#8c8c8c;">Constant</div><svg class="a" style="left:991.5px;top:265.5px" width="7" height="5"><path d="M0.5 0.8L3.5 3.8l3-3" stroke="#7a7a7a" stroke-width="1.1" fill="none"/></svg>
<div class="a t" style="left:906px;top:280.5px;font-size:9.6px;color:#8c8c8c;">Radius:</div><div class="a" style="left:949px;top:279px;width:53.5px;height:15px;background:#4a4a4a;border:1px solid #5e5e5e;border-radius:2px"></div><div class="a t" style="left:955px;top:281px;font-size:9.6px;color:#767676;">1</div><svg class="a" style="left:991.5px;top:284.5px" width="7" height="5"><path d="M0.5 0.8L3.5 3.8l3-3" stroke="#7a7a7a" stroke-width="1.1" fill="none"/></svg><div class="a" style="left:988.5px;top:280px;width:1px;height:13px;background:#3e3e3e"></div>
<div class="a" style="left:843.5px;top:276px;width:25px;height:16px;border:1px solid #3a3a3a;background:#505050"></div>
<div class="a" style="left:826px;top:297.5px;width:180px;height:1.5px;background:#4a4a4a"></div>
<div class="a" style="left:826px;top:298px;width:180px;height:12px;overflow:hidden"><div class="a" style="left:4px;top:4px;width:9px;height:9px;border:1px solid #3c3c3c;background:#4c4c4c;border-radius:1.5px"></div><div class="a t" style="left:16px;top:3.5px;font-size:9.6px;color:#d8d8d8">Linearize Colors</div><div class="a" style="left:125px;top:4px;width:9px;height:9px;background:#e4e4e4;border-radius:1.5px"></div><svg class="a" style="left:125px;top:4px" width="9" height="9"><path d="M2 4.6l1.8 1.9L7.2 2.2" stroke="#222" stroke-width="1.6" fill="none"/></svg><div class="a t" style="left:137px;top:3.5px;font-size:9.6px;color:#d8d8d8">Shadows</div></div>
<div class="a" style="left:1006px;top:108.5px;width:12px;height:201.5px;background:#4b4b4b"></div>
<div class="a" style="left:1008px;top:111.5px;width:8.5px;height:168px;background:#656565;border-radius:4.5px"></div>
<div class="a" style="left:826px;top:310px;width:192px;height:22px;background:#4c4c4c"></div>
<div class="a" style="left:826px;top:310px;width:192px;height:1px;background:#444"></div>
<svg class="a" style="left:955px;top:314px" width="14" height="14" viewBox="0 0 14 14" fill="none" stroke="#e6e6e6"><rect x="1" y="1" width="12" height="12" rx="1" stroke-width="1.4"/><path d="M7 3.5l3 1.5v3.5L7 10 4 8.5V5z" stroke-width="1.1"/><path d="M4 5l3 1.5L10 5M7 6.5V10" stroke-width="1"/></svg>
<svg class="a" style="left:982px;top:314px" width="12" height="14" viewBox="0 0 12 14" fill="none" stroke="#7a7a7a" stroke-width="1.1"><path d="M1 3h10M4 3V1.5h4V3M2 3l1 10h6l1-10M5 5v6M7 5v6"/></svg>
<!-- panel3d -->
<div class="a" style="left:826px;top:332px;width:192px;height:3px;background:#3a3a3a"></div>
<div class="a" style="left:826px;top:335px;width:192px;height:24px;background:#444444"></div>
<div class="a" style="left:826px;top:335px;width:30px;height:24px;background:#535353"></div>
<div class="a" style="left:857px;top:335px;width:44px;height:24px;background:#474747"></div>
<div class="a" style="left:902px;top:335px;width:57px;height:24px;background:#474747"></div>
<div class="a t" style="left:834px;top:341.5px;font-size:9.9px;color:#f0f0f0;font-weight:bold;">3D</div>
<div class="a t" style="left:864px;top:341.5px;font-size:9.2px;color:#c8c8c8;font-weight:bold;">Layers</div>
<div class="a t" style="left:910px;top:341.5px;font-size:9.2px;color:#c8c8c8;font-weight:bold;">Channels</div>
<div class="a" style="left:1005px;top:343px;width:9px;height:7px;background:repeating-linear-gradient(#a8a8a8 0 1px,transparent 1px 2px)"></div>
<div class="a" style="left:881.5px;top:367px;width:18.5px;height:18.5px;background:#383838;border-radius:2px"></div>
<svg class="a" style="left:884.5px;top:370px" width="13" height="13" viewBox="0 0 13 13" fill="none" stroke="#e0e0e0" stroke-width="1.2"><path d="M1.5 1v11M1.5 2.5h10M3.5 6h8M3.5 9.5h8"/><circle cx="7" cy="6" r="1.2" fill="#e0e0e0"/><circle cx="6" cy="9.5" r="1.2" fill="#e0e0e0"/></svg>
<svg class="a" style="left:906px;top:369px" width="11" height="15" viewBox="0 0 11 15" fill="none" stroke="#d0d0d0" stroke-width="1.2"><rect x="1.5" y="1.5" width="8" height="12" rx="2.5"/><path d="M1.5 5h8M1.5 8h8M1.5 11h8M4.2 2v11M6.8 2v11" stroke-width="0.8"/></svg>
<svg class="a" style="left:927px;top:369px" width="13" height="15" viewBox="0 0 13 15" fill="none" stroke="#c8c8c8" stroke-width="1.1"><path d="M2 2h6v11H2zM8 5l3 2.5L8 10"/><path d="M4 4v7M6 4v7" stroke-width="0.8"/></svg>
<svg class="a" style="left:949px;top:368px" width="11" height="16" viewBox="0 0 11 16" fill="#dcdcdc"><path d="M5.5 1a4.5 4.5 0 00-2.5 8.2V11h5V9.2A4.5 4.5 0 005.5 1z"/><rect x="3" y="12" width="5" height="1.3"/><rect x="3.5" y="14" width="4" height="1.3"/></svg>
<div class="a" style="left:826px;top:391px;width:180px;height:1px;background:#4b4b4b"></div>
<div class="a" style="left:826px;top:408px;width:180px;height:1px;background:#4b4b4b"></div>
<svg class="a" style="left:829px;top:394.5px" width="13" height="8" viewBox="0 0 13 8"><path d="M0.7 4C2.5 1.2 4.5 0.5 6.5 0.5S10.5 1.2 12.3 4C10.5 6.8 8.5 7.5 6.5 7.5S2.5 6.8 0.7 4z" fill="#8a8a8a"/><circle cx="6.5" cy="4" r="2.2" fill="#535353"/><circle cx="6.5" cy="4" r="1" fill="#8a8a8a"/></svg>
<svg class="a" style="left:847px;top:391px" width="13" height="15" viewBox="0 0 13 15" fill="none" stroke="#e0e0e0" stroke-width="1.1"><circle cx="6.5" cy="4.5" r="1.6" fill="#e0e0e0"/><path d="M6.5 0.5v1.5M3 1.5l1 1M10 1.5l-1 1M2 4.5h1.8M9.2 4.5H11"/><path d="M1.2 10.5L6.5 7.5 11.8 10.5 6.5 13.5z" stroke-width="1.6"/></svg>
<div class="a t" style="left:865px;top:392.5px;font-size:9.6px;color:#e2e2e2;">Environment</div>
<div class="a" style="left:826px;top:425.75px;width:180px;height:1px;background:#4b4b4b"></div>
<div class="a" style="left:860px;top:409.25px;width:146.5px;height:16px;background:#6a6a6a"></div>
<svg class="a" style="left:829px;top:412.25px" width="13" height="8" viewBox="0 0 13 8"><path d="M0.7 4C2.5 1.2 4.5 0.5 6.5 0.5S10.5 1.2 12.3 4C10.5 6.8 8.5 7.5 6.5 7.5S2.5 6.8 0.7 4z" fill="#8a8a8a"/><circle cx="6.5" cy="4" r="2.2" fill="#535353"/><circle cx="6.5" cy="4" r="1" fill="#8a8a8a"/></svg>
<svg class="a" style="left:847px;top:409.75px" width="13" height="13" viewBox="0 0 13 13" fill="none" stroke="#e0e0e0" stroke-width="1.2"><path d="M1.5 1v11M1.5 2.5h10M3.5 6h8M3.5 9.5h8"/><circle cx="7" cy="6" r="1.2" fill="#e0e0e0"/><circle cx="6" cy="9.5" r="1.2" fill="#e0e0e0"/></svg>
<div class="a t" style="left:865px;top:410.25px;font-size:9.6px;color:#e2e2e2;">Scene</div>
<div class="a" style="left:826px;top:443.5px;width:180px;height:1px;background:#4b4b4b"></div>
<svg class="a" style="left:829px;top:430px" width="13" height="8" viewBox="0 0 13 8"><path d="M0.7 4C2.5 1.2 4.5 0.5 6.5 0.5S10.5 1.2 12.3 4C10.5 6.8 8.5 7.5 6.5 7.5S2.5 6.8 0.7 4z" fill="#8a8a8a"/><circle cx="6.5" cy="4" r="2.2" fill="#535353"/><circle cx="6.5" cy="4" r="1" fill="#8a8a8a"/></svg>
<svg class="a" style="left:860px;top:429.5px" width="14" height="10" viewBox="0 0 14 10" fill="#e0e0e0"><rect x="0.5" y="1" width="9" height="8" rx="1"/><path d="M9.5 4l4-2.5v7l-4-2.5z"/></svg>
<div class="a t" style="left:879px;top:428px;font-size:9.6px;color:#e2e2e2;">Current View</div>
<div class="a" style="left:826px;top:461.25px;width:180px;height:1px;background:#4b4b4b"></div>
<svg class="a" style="left:829px;top:447.75px" width="13" height="8" viewBox="0 0 13 8"><path d="M0.7 4C2.5 1.2 4.5 0.5 6.5 0.5S10.5 1.2 12.3 4C10.5 6.8 8.5 7.5 6.5 7.5S2.5 6.8 0.7 4z" fill="#e8e8e8"/><circle cx="6.5" cy="4" r="2.2" fill="#535353"/><circle cx="6.5" cy="4" r="1" fill="#e8e8e8"/></svg>
<svg class="a" style="left:861px;top:445.25px" width="13" height="13" viewBox="0 0 13 13" fill="none" stroke="#e0e0e0" stroke-width="1.1"><circle cx="5.5" cy="5.5" r="2" fill="#e0e0e0"/><path d="M5.5 0.5v2M5.5 8.5v2M0.5 5.5h2M8.5 5.5h2M2 2l1.2 1.2M9 2L7.8 3.2M2 9l1.2-1.2"/><path d="M8 8l4 4" stroke-width="1.5"/></svg>
<div class="a t" style="left:879px;top:445.75px;font-size:9.6px;color:#e2e2e2;">Infinite Light 1</div>
<div class="a" style="left:826px;top:479px;width:180px;height:1px;background:#4b4b4b"></div>
<svg class="a" style="left:829px;top:465.5px" width="13" height="8" viewBox="0 0 13 8"><path d="M0.7 4C2.5 1.2 4.5 0.5 6.5 0.5S10.5 1.2 12.3 4C10.5 6.8 8.5 7.5 6.5 7.5S2.5 6.8 0.7 4z" fill="#e8e8e8"/><circle cx="6.5" cy="4" r="2.2" fill="#535353"/><circle cx="6.5" cy="4" r="1" fill="#e8e8e8"/></svg>
<svg class="a" style="left:848px;top:466px" width="8" height="6"><path d="M0.8 0.8L4 4.5 7.2 0.8" stroke="#bdbdbd" stroke-width="1.1" fill="none"/></svg>
<svg class="a" style="left:862px;top:462.5px" width="11" height="14" viewBox="0 0 11 14" fill="none" stroke="#e0e0e0" stroke-width="1.2"><rect x="1.5" y="1" width="8" height="12" rx="2.5"/><path d="M1.5 4.5h8M1.5 7.5h8M1.5 10.5h8M4.2 1.5v11M6.8 1.5v11" stroke-width="0.8"/></svg>
<div class="a t" style="left:879px;top:463.5px;font-size:9.6px;color:#e2e2e2;">Body16</div>
<div class="a" style="left:826px;top:496.75px;width:180px;height:1px;background:#4b4b4b"></div>
<svg class="a" style="left:829px;top:483.25px" width="13" height="8" viewBox="0 0 13 8"><path d="M0.7 4C2.5 1.2 4.5 0.5 6.5 0.5S10.5 1.2 12.3 4C10.5 6.8 8.5 7.5 6.5 7.5S2.5 6.8 0.7 4z" fill="#e8e8e8"/><circle cx="6.5" cy="4" r="2.2" fill="#535353"/><circle cx="6.5" cy="4" r="1" fill="#e8e8e8"/></svg>
<svg class="a" style="left:875px;top:480.75px" width="13" height="14" viewBox="0 0 13 14" fill="none" stroke="#e0e0e0" stroke-width="1.1"><path d="M2 3h6v9H2zM8 5l3 2.5L8 10"/><path d="M4 4v7M6 4v7" stroke-width="0.8"/><path d="M3 1l1 1.5M7 1L6 2.5"/></svg>
<div class="a t" style="left:893px;top:481.25px;font-size:9.6px;color:#e2e2e2;">Steel_-_Satin</div>
<div class="a" style="left:826px;top:514.5px;width:180px;height:1px;background:#4b4b4b"></div>
<svg class="a" style="left:829px;top:501px" width="13" height="8" viewBox="0 0 13 8"><path d="M0.7 4C2.5 1.2 4.5 0.5 6.5 0.5S10.5 1.2 12.3 4C10.5 6.8 8.5 7.5 6.5 7.5S2.5 6.8 0.7 4z" fill="#8a8a8a"/><circle cx="6.5" cy="4" r="2.2" fill="#535353"/><circle cx="6.5" cy="4" r="1" fill="#8a8a8a"/></svg>
<svg class="a" style="left:860px;top:500.5px" width="14" height="10" viewBox="0 0 14 10" fill="#e0e0e0"><rect x="0.5" y="1" width="9" height="8" rx="1"/><path d="M9.5 4l4-2.5v7l-4-2.5z"/></svg>
<div class="a t" style="left:879px;top:499px;font-size:9.6px;color:#e2e2e2;">Default Camera</div>
<div class="a" style="left:845px;top:391px;width:1px;height:123px;background:#474747"></div>
<div class="a" style="left:1006px;top:391px;width:12px;height:198px;background:#4c4c4c"></div><div class="a" style="left:826px;top:515px;width:180px;height:74px;background:#4c4c4c"></div>
<div class="a" style="left:826px;top:589px;width:192px;height:1px;background:#444"></div>
<div class="a" style="left:826px;top:590px;width:192px;height:19px;background:#4e4e4e"></div>
<svg class="a" style="left:857px;top:594px" width="10" height="13" viewBox="0 0 10 13" fill="none" stroke="#e0e0e0" stroke-width="1.1"><rect x="1" y="1" width="8" height="11" rx="1.5"/><path d="M1 4h8M1 7h8M1 10h8M4 1v11M6.5 1v11" stroke-width="0.7"/></svg>
<svg class="a" style="left:884px;top:593px" width="10" height="14" viewBox="0 0 10 14" fill="#e0e0e0"><path d="M5 1a4 4 0 00-2.2 7.3V10h4.4V8.3A4 4 0 005 1z"/><rect x="3" y="11" width="4" height="1.2"/></svg>
<svg class="a" style="left:907px;top:594px" width="13" height="13" viewBox="0 0 13 13" fill="none" stroke="#e0e0e0" stroke-width="1.2"><rect x="1" y="1" width="11" height="11"/><path d="M6.5 3.5l2.5 1.3v3L6.5 9 4 7.8v-3z" stroke-width="1"/></svg>
<svg class="a" style="left:932px;top:593px" width="12" height="14" viewBox="0 0 12 14" fill="#e0e0e0"><circle cx="6" cy="3" r="2"/><rect x="5" y="4.5" width="2" height="3.5"/><rect x="1" y="8.5" width="10" height="2.5"/><rect x="1" y="12" width="10" height="1.2"/></svg>
<svg class="a" style="left:957px;top:593px" width="13" height="14" viewBox="0 0 13 14" fill="#9a9a9a"><circle cx="5" cy="3" r="1.8"/><rect x="4" y="4.5" width="2" height="3.5"/><rect x="1" y="8.5" width="8" height="2"/><circle cx="10.5" cy="11" r="1.8" fill="none" stroke="#9a9a9a"/></svg>
<svg class="a" style="left:985px;top:593px" width="12" height="14" viewBox="0 0 12 14" fill="none" stroke="#8a8a8a" stroke-width="1.1"><path d="M1 3h10M4 3V1.5h4V3M2 3l1 10h6l1-10M5 5v6M7 5v6"/></svg>
</body></html>
